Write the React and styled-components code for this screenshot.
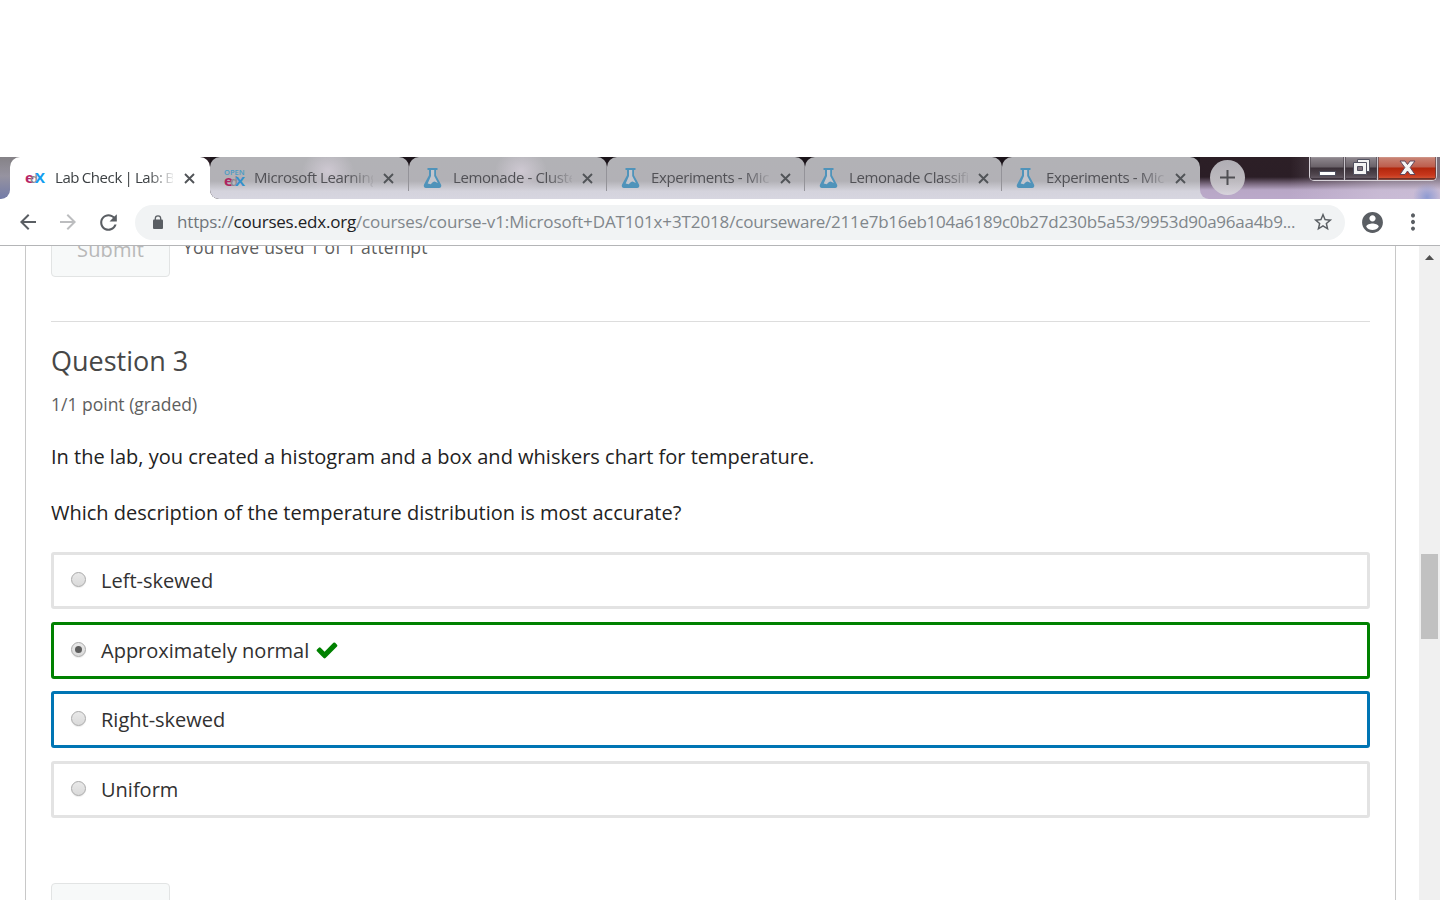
import React from "react";
import styled, { createGlobalStyle } from "styled-components";

const GlobalStyle = createGlobalStyle`
  * { box-sizing: border-box; }
  body { margin: 0; background: #fff; font-family: "Open Sans", sans-serif; }
  h2, p { margin: 0; font-weight: 400; }
`;

const Screen = styled.div`
  width: 1440px;
  height: 900px;
  padding-top: 157px;
  display: flex;
  flex-direction: column;
  overflow: hidden;
`;

const TabStrip = styled.div`
  height: 42px;
  flex: none;
  display: flex;
  background: linear-gradient(90deg, #858287 20px, transparent 20px) 0 0 / 100% 12px no-repeat, linear-gradient(#2a1d24 12px, #fff 12px);
`;

const StripEdge = styled.div`
  width: 10px;
  background: linear-gradient(#858287, #9693a0 45%, #737ba8);
  border-bottom-right-radius: 9px;
`;

const InactiveTabs = styled.div`
  display: flex;
  width: 990px;
  border-bottom-left-radius: 9px;
  overflow: hidden;
  background: #1b141a;
`;

const Tab = styled.div`
  position: relative;
  width: ${(p) => p.$width}px;
  flex: none;
  height: 42px;
  padding-left: 14px;
  display: flex;
  align-items: center;
  border-radius: 10px 10px 0 0;
  background: ${(p) =>
    p.$active
      ? "#fff"
      : "radial-gradient(ellipse 26px 22px at " + p.$glow + "px 14px, rgba(218,210,222,.7), rgba(218,210,222,0)), linear-gradient(#b2b2b6 0, #b2b1b6 24px, #d4d3dc 34px, #d7d6e0 42px)"};
  &::after {
    content: "";
    position: absolute;
    right: 0;
    top: 9px;
    width: 1px;
    height: 25px;
    background: ${(p) => (p.$divider ? "#949399" : "transparent")};
  }
`;

const Favicon = styled.span`
  width: 22px;
  height: 22px;
  flex: none;
  display: flex;
  align-items: center;
`;

const TabTitle = styled.span`
  width: 119px;
  margin: -2px 0 0 8px;
  flex: none;
  overflow: hidden;
  white-space: nowrap;
  font-size: 15px;
  line-height: 22px;
  letter-spacing: -0.4px;
  word-spacing: ${(p) => (p.$active ? -0.9 : 0)}px;
  text-indent: ${(p) => (p.$active ? 1 : 0)}px;
  color: ${(p) => (p.$active ? "#3c4043" : "#515156")};
  mask-image: linear-gradient(90deg, #000 94px, transparent 122px);
`;

const CloseIcon = styled.svg`
  width: 11px;
  height: 11px;
  margin-left: ${(p) => (p.$active ? 11 : 10)}px;
  flex: none;
`;

const StripRest = styled.div`
  flex: 1;
  display: flex;
  background: #d7d6e0;
`;

const StripGlass = styled.div`
  flex: 1;
  display: flex;
  justify-content: space-between;
  padding: 0 3px 0 10px;
  border-bottom-left-radius: 9px;
  background:
    radial-gradient(circle 14px at 227px 40px, #8f9bd2, rgba(143,155,210,0)),
    linear-gradient(90deg, transparent 90px, rgba(222,213,230,.4) 180px, rgba(222,213,230,.45)),
    linear-gradient(#2c1f26 0, #2b1e26 20px, #7b6a80 27px, #b8a7c6 33px, #bba9ca 42px);
`;

const NewTab = styled.div`
  width: 35px;
  height: 35px;
  margin-top: 3px;
  border-radius: 50%;
  background: linear-gradient(#b0aeb4, #bdbabf 60%, #d8d4dd);
  display: grid;
  place-items: center;
`;

const WindowControls = styled.div`
  width: 128px;
  height: 24px;
  display: flex;
  border: 1px solid #d8d3da;
  border-top: 0;
  border-radius: 0 0 5px 5px;
  overflow: hidden;
`;

const WindowButton = styled.div`
  width: ${(p) => p.$width}px;
  padding-bottom: ${(p) => p.$lift || 0}px;
  display: grid;
  place-items: center;
  border-right: ${(p) => (p.$close ? 0 : "1px solid #c9c4cb")};
  box-shadow: inset 0 0 0 1px rgba(255,255,255,.12), inset 0 -1px 0 1px rgba(20,10,20,.5);
  background: ${(p) =>
    p.$close
      ? "linear-gradient(#c98678 0, #bd5d4c 10px, #b2260c 11px, #c7371c 18px, #d86a48 24px)"
      : "linear-gradient(#908990 0, #696168 10px, #3a3038 11px, #51474f 18px, #766c78 24px)"};
`;

const Toolbar = styled.div`
  height: 47px;
  flex: none;
  display: flex;
  align-items: center;
  padding: 0 15px 0 16px;
  background: #fff;
  border-bottom: 1px solid #b4b5b7;
`;

const ToolIcon = styled.svg`
  width: ${(p) => p.$size || 24}px;
  height: ${(p) => p.$size || 24}px;
  margin-right: ${(p) => p.$gap || 0}px;
  flex: none;
  fill: ${(p) => p.$color || "#5a5e63"};
`;

const LockIcon = styled.svg`
  width: 10px;
  height: 14px;
  flex: none;
  fill: #5a5e63;
`;

const AddressBar = styled.div`
  width: 1210px;
  height: 35px;
  margin-right: 15px;
  padding: 0 11px 0 18px;
  display: flex;
  align-items: center;
  justify-content: space-between;
  border-radius: 18px;
  background: #f1f3f4;
`;

const Url = styled.span`
  width: 1122px;
  margin-left: 14px;
  margin-right: auto;
  flex: none;
  font-size: 17px;
  line-height: 26px;
  letter-spacing: -0.27px;
  white-space: nowrap;
  color: #80868b;
`;

const UrlScheme = styled.span`
  color: #70757a;
  letter-spacing: -0.18px;
`;

const UrlHost = styled.span`
  color: #202124;
  letter-spacing: -0.22px;
`;

const UrlCourse = styled.span`
  letter-spacing: -0.12px;
`;

const Page = styled.div`
  flex: 1;
  min-height: 0;
  display: flex;
  overflow: hidden;
`;

const Viewport = styled.div`
  width: 1419px;
  padding: 0 23px 0 25px;
  overflow: hidden;
`;

const Sheet = styled.main`
  height: 654px;
  padding: 0 25px;
  border: solid #c8c8c8;
  border-width: 0 1px;
  overflow: hidden;
`;

const SubmitRow = styled.div`
  display: flex;
  height: 31px;
  margin-bottom: 44px;
`;

const SubmitButton = styled.div`
  width: 119px;
  height: 58px;
  margin-top: ${(p) => p.$top}px;
  border: 1px solid #e2e4e4;
  border-radius: 4px;
  background: #f7f9f9;
  color: #b8b8b8;
  font-size: 20px;
  line-height: 59px;
  letter-spacing: 0.1px;
  text-align: center;
`;

const Attempts = styled.span`
  margin: -12px 0 0 13px;
  font-size: 17.5px;
  line-height: 26px;
  letter-spacing: 0.22px;
  color: #5e5e5e;
`;

const Problem = styled.section`
  border-top: 1px solid #ddd;
  padding-top: 19px;
`;

const Title = styled.h2`
  font-size: 27px;
  line-height: 40px;
  color: #474747;
`;

const Progress = styled.p`
  margin-top: 10px;
  font-size: 17.5px;
  line-height: 26px;
  color: #5e5e5e;
`;

const Prompt = styled.p`
  margin-top: ${(p) => p.$top}px;
  font-size: 20px;
  line-height: 28px;
  color: #222;
`;

const Options = styled.div`
  margin-top: 25px;
`;

const borderColors = { plain: "#e3e3e3", correct: "#008100", focused: "#0075b4" };

const Option = styled.label`
  display: flex;
  align-items: center;
  height: 57px;
  margin-top: ${(p) => p.$gap}px;
  padding-left: 17px;
  border: 3px solid ${(p) => borderColors[p.$state]};
  border-radius: 3px;
`;

const Radio = styled.span`
  width: 15px;
  height: 15px;
  margin: 0 15px 2px 0;
  display: grid;
  place-items: center;
  border: 1px solid #a9a9a9;
  border-radius: 50%;
  background: linear-gradient(#e9e9e9, #dadada);
  box-shadow: 0 1px 1px rgba(0,0,0,.08);
  &::after {
    content: "";
    width: 7px;
    height: 7px;
    border-radius: 50%;
    background: ${(p) => (p.$checked ? "#5c5c5c" : "transparent")};
  }
`;

const OptionText = styled.span`
  font-size: 20px;
  line-height: 28px;
  color: #313131;
`;

const CheckIcon = styled.svg`
  width: 24px;
  height: 24px;
  margin: 0 0 1px 6px;
  fill: #008100;
`;

const Scrollbar = styled.div`
  width: 21px;
  padding: 9px 2px 0;
  background: #f0f0f0;
`;

const ScrollArrow = styled.svg`
  display: block;
  width: 9px;
  height: 5px;
  margin: 0 auto;
`;

const ScrollThumb = styled.div`
  height: 85px;
  margin-top: 294px;
  background: #c1c1c1;
`;

const SvgText = styled.text`
  font-family: "Open Sans", sans-serif;
  font-weight: ${(p) => p.$weight || 700};
`;

function EdxLogo({ open }) {
  const base = open ? 18.7 : 15.7;
  return (
    <svg width="22" height="22" viewBox="0 0 22 22">
      {open && (
        <SvgText x="0" y="8.3" fontSize="7.6" $weight={600} fill="#4b9bc4" textLength="20.5" lengthAdjust="spacingAndGlyphs">OPEN</SvgText>
      )}
      <SvgText x={open ? 0 : 1} y={base} fontSize="14" fill={open ? "#ad2560" : "#b72667"} textLength="9" lengthAdjust="spacingAndGlyphs">e</SvgText>
      <SvgText x="6" y={base} fontSize="12" $weight={600} fill="#8b8b8e" textLength="8" lengthAdjust="spacingAndGlyphs">d</SvgText>
      <SvgText x="11" y={base} fontSize={open ? 13 : 14} fill={open ? "#3390cc" : "#129ef0"} textLength="10" lengthAdjust="spacingAndGlyphs">X</SvgText>
    </svg>
  );
}

function Flask() {
  return (
    <svg width="20" height="22" viewBox="0 0 20 22">
      <path fill="#4f93ba" d="M4.500 1h10v2H13v5.200l5 9.300c.8 1.600.1 3.500-2 3.500H3c-2 0-2.700-1.900-2-3.500L6 8.200V3H4.500z" />
      <path fill="#c3c5cc" d="M8 3h3.200v6l3.700 7-3.300-1.400-1.600.4-2.300 2.200-3-.8L8 9z" />
    </svg>
  );
}

function Close({ active }) {
  return (
    <CloseIcon $active={active} viewBox="0 0 11 11">
      <path d="M1 1l9 9M10 1l-9 9" stroke="#515458" strokeWidth="1.9" />
    </CloseIcon>
  );
}

const tabs = [
  { title: "Microsoft Learning", width: 199, icon: <EdxLogo open />, glow: 118 },
  { title: "Lemonade - Cluster", width: 198, icon: <Flask />, glow: 112 },
  { title: "Experiments - Micro", width: 198, icon: <Flask />, glow: -60 },
  { title: "Lemonade Classific", width: 197, icon: <Flask />, glow: -60 },
  { title: "Experiments - Micro", width: 198, icon: <Flask />, glow: -60 },
];

const options = [
  { label: "Left-skewed", state: "plain", gap: 0 },
  { label: "Approximately normal", state: "correct", gap: 13, checked: true },
  { label: "Right-skewed", state: "focused", gap: 12 },
  { label: "Uniform", state: "plain", gap: 13 },
];

export default function App() {
  return (
    <Screen>
      <GlobalStyle />
      <TabStrip>
        <StripEdge />
        <Tab $active $width={200}>
          <Favicon><EdxLogo /></Favicon>
          <TabTitle $active>Lab Check | Lab: Bu</TabTitle>
          <Close active />
        </Tab>
        <InactiveTabs>
          {tabs.map((tab, i) => (
            <Tab key={i} $width={tab.width} $glow={tab.glow} $divider={i < 4}>
              <Favicon>{tab.icon}</Favicon>
              <TabTitle>{tab.title}</TabTitle>
              <Close />
            </Tab>
          ))}
        </InactiveTabs>
        <StripRest>
          <StripGlass>
            <NewTab>
              <svg width="15" height="15" viewBox="0 0 15 15"><path d="M7.500 0v15M0 7.500h15" stroke="#505054" strokeWidth="2" /></svg>
            </NewTab>
            <WindowControls>
              <WindowButton $width={35}>
                <svg width="17" height="16" viewBox="0 0 17 16"><rect x=".5" y="10.500" width="16" height="4" fill="#fff" stroke="#50505f" /></svg>
              </WindowButton>
              <WindowButton $width={33} $lift={3}>
                <svg width="19" height="18" viewBox="0 0 19 18">
                  <path d="M5.500 1.500h12v12h-12z" fill="#f3f3f3" stroke="#50505f" />
                  <path d="M1.500 4.500h13v12h-13z" fill="#f3f3f3" stroke="#50505f" />
                  <path d="M5.500 8.500h5v4h-5z" fill="#82757f" stroke="#50505f" />
                </svg>
              </WindowButton>
              <WindowButton $width={58} $close $lift={2}>
                <svg width="17" height="16" viewBox="0 0 17 16">
                  <path d="M1 1h5l2.500 3.500L11 1h5l-4.800 6.500L16 14.500h-5L8.500 11 6 14.500H1l4.800-7z" fill="#f5f5f5" stroke="#60465a" />
                </svg>
              </WindowButton>
            </WindowControls>
          </StripGlass>
        </StripRest>
      </TabStrip>
      <Toolbar>
        <ToolIcon viewBox="0 0 24 24" $gap={16}><path d="M20 11H7.830l5.590-5.590L12 4l-8 8 8 8 1.410-1.410L7.830 13H20v-2z" /></ToolIcon>
        <ToolIcon viewBox="0 0 24 24" $gap={16} $color="#bcbdbf"><path d="M12 4l-1.410 1.410L16.170 11H4v2h12.170l-5.580 5.590L12 20l8-8z" /></ToolIcon>
        <ToolIcon viewBox="0 0 24 24" $size={25} $gap={14}><path d="M17.650 6.350C16.200 4.900 14.210 4 12 4c-4.420 0-7.990 3.580-7.990 8s3.570 8 7.990 8c3.730 0 6.840-2.550 7.730-6h-2.080c-.82 2.330-3.040 4-5.650 4-3.310 0-6-2.690-6-6s2.690-6 6-6c1.660 0 3.140.69 4.220 1.780L13 11h7V4l-2.350 2.350z" /></ToolIcon>
        <AddressBar>
          <LockIcon viewBox="0 0 10 14">
            <rect y="4.500" width="10" height="9.500" rx="1" />
            <path d="M2.300 5.500V3.600a2.700 2.700 0 0 1 5.400 0v1.900" fill="none" stroke="#5a5e63" strokeWidth="1.300" />
          </LockIcon>
          <Url><UrlScheme>https://</UrlScheme><UrlHost>courses.edx.org</UrlHost><UrlCourse>/courses/course-v1:Microsoft+DAT101x+3T2018/</UrlCourse>courseware/211e7b16eb104a6189c0b27d230b5a53/9953d90a96aa4b9...</Url>
          <ToolIcon viewBox="0 0 24 24" $size={22}><path d="M22 9.240l-7.190-.62L12 2 9.190 8.630 2 9.240l5.460 4.730L5.820 21 12 17.270 18.180 21l-1.630-7.030L22 9.240zM12 15.400l-3.760 2.270 1-4.280-3.320-2.880 4.380-.38L12 6.100l1.710 4.040 4.380.38-3.320 2.880 1 4.280L12 15.400z" /></ToolIcon>
        </AddressBar>
        <ToolIcon viewBox="0 0 24 24" $size={25} $gap={16}><path d="M12 2C6.480 2 2 6.480 2 12s4.480 10 10 10 10-4.480 10-10S17.520 2 12 2zm0 3c1.660 0 3 1.340 3 3s-1.340 3-3 3-3-1.340-3-3 1.340-3 3-3zm0 14.200c-2.500 0-4.710-1.280-6-3.220.03-1.990 4-3.080 6-3.080 1.990 0 5.970 1.090 6 3.080-1.290 1.940-3.500 3.220-6 3.220z" /></ToolIcon>
        <ToolIcon viewBox="0 0 24 24"><path d="M12 8c1.100 0 2-.9 2-2s-.9-2-2-2-2 .9-2 2 .9 2 2 2zm0 2c-1.100 0-2 .9-2 2s.9 2 2 2 2-.9 2-2-.9-2-2-2zm0 6c-1.100 0-2 .9-2 2s.9 2 2 2 2-.9 2-2-.9-2-2-2z" transform="translate(0 -1.200) scale(1 1.100)" /></ToolIcon>
      </Toolbar>
      <Page>
        <Viewport>
          <Sheet>
            <SubmitRow>
              <SubmitButton $top={-27}>Submit</SubmitButton>
              <Attempts>You have used 1 of 1 attempt</Attempts>
            </SubmitRow>
            <Problem>
              <Title>Question 3</Title>
              <Progress>1/1 point (graded)</Progress>
              <Prompt $top={26}>In the lab, you created a histogram and a box and whiskers chart for temperature.</Prompt>
              <Prompt $top={28}>Which description of the temperature distribution is most accurate?</Prompt>
              <Options>
                {options.map((option) => (
                  <Option key={option.label} $state={option.state} $gap={option.gap}>
                    <Radio $checked={option.checked} />
                    <OptionText>{option.label}</OptionText>
                    {option.checked && (
                      <CheckIcon viewBox="0 0 1792 1792"><path d="M1671 566q0 40-28 68l-724 724-136 136q-28 28-68 28t-68-28l-136-136-362-362q-28-28-28-68t28-68l136-136q28-28 68-28t68 28l294 295 656-657q28-28 68-28t68 28l136 136q28 28 28 68z" /></CheckIcon>
                    )}
                  </Option>
                ))}
              </Options>
              <SubmitButton $top={65} />
            </Problem>
          </Sheet>
        </Viewport>
        <Scrollbar>
          <ScrollArrow viewBox="0 0 9 5"><path d="M0 5L4.500 0 9 5z" fill="#505050" /></ScrollArrow>
          <ScrollThumb />
        </Scrollbar>
      </Page>
    </Screen>
  );
}
